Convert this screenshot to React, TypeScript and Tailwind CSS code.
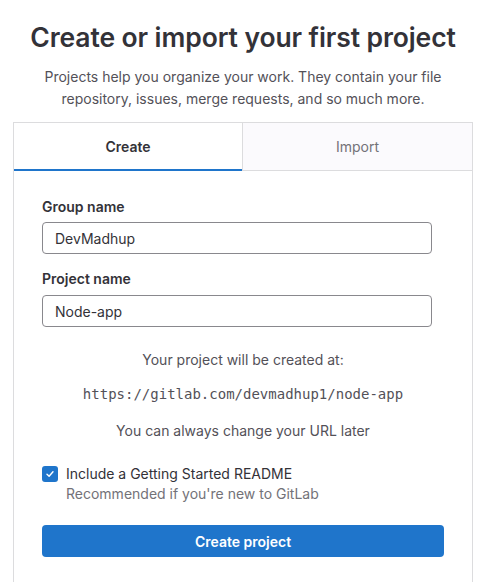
import React from "react";

export default function App() {
  return (
    <div className="w-[486px] h-[582px] overflow-hidden bg-white font-['Inter',sans-serif] text-[#333238]">
      <div className="flex flex-col items-center pt-[17px]">
        <h1 className="text-[26.5px] leading-[40px] font-semibold text-[#333238] tracking-[-0.1px]">
          Create or import your first project
        </h1>
        <p className="mt-[9px] text-center text-[14px] leading-[22px] text-[#535158]">
          Projects help you organize your work. They contain your file
          <br />
          repository, issues, merge requests, and so much more.
        </p>
      </div>

      <div className="mx-[13px] mt-[12px] border border-[#dcdcde] h-[500px]">
        <div className="flex h-[48px]">
          <div className="w-[228px] flex items-center justify-center text-[14px] font-semibold text-[#333238] border-b-2 border-[#1f75cb]">
            Create
          </div>
          <div className="flex-1 flex items-center justify-center text-[14px] text-[#737278] bg-[#fbfafd] border-l border-b border-[#dcdcde]">
            Import
          </div>
        </div>

        <div className="px-[28px] pt-[26px]">
          <label className="block text-[14px] leading-[20px] font-semibold text-[#333238]">
            Group name
          </label>
          <div className="mt-[5px] w-[390px] h-[32px] border border-[#89888d] rounded-[4px] px-[12px] flex items-center text-[14px] text-[#333238]">
            DevMadhup
          </div>

          <label className="block mt-[15px] text-[14px] leading-[20px] font-semibold text-[#333238]">
            Project name
          </label>
          <div className="mt-[6px] w-[390px] h-[32px] border border-[#89888d] rounded-[4px] px-[12px] flex items-center text-[14px] text-[#333238]">
            Node-app
          </div>

          <div className="mt-[23px] flex flex-col items-center text-[14px] text-[#535158]">
            <p className="leading-[20px]">Your project will be created at:</p>
            <p className="mt-[14px] leading-[20px] font-['DejaVu_Sans_Mono',monospace] text-[14px] text-[#535158]">
              https://gitlab.com/devmadhup1/node-app
            </p>
            <p className="mt-[17px] leading-[20px]">You can always change your URL later</p>
          </div>

          <div className="mt-[23px] flex gap-[8px]">
            <div className="mt-[2px] w-[16px] h-[16px] rounded-[3px] bg-[#1f75cb] flex items-center justify-center">
              <svg width="10" height="10" viewBox="0 0 10 10" fill="none">
                <path d="M2 5.2 L4.1 7.2 L8 2.8" stroke="white" strokeWidth="1.4" strokeLinecap="round" strokeLinejoin="round" />
              </svg>
            </div>
            <div className="text-[14px] leading-[20px]">
              <p className="text-[#333238]">Include a Getting Started README</p>
              <p className="text-[#737278]">Recommended if you're new to GitLab</p>
            </div>
          </div>

          <button className="mt-[21px] w-[402px] h-[32px] rounded-[4px] bg-[#1f75cb] text-white text-[14px] font-semibold">
            Create project
          </button>
        </div>
      </div>
    </div>
  );
}
